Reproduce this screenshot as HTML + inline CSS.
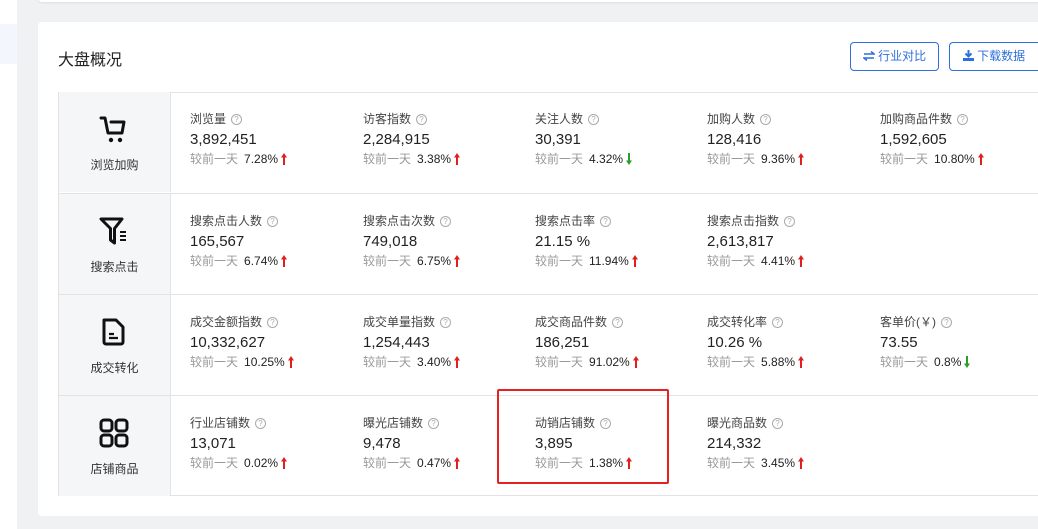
<html><head><style>
body{margin:0;width:1038px;height:529px;background:#f0f1f3;font-family:"Liberation Sans","Noto Sans CJK SC",sans-serif;position:relative;overflow:hidden}
.side{position:absolute;left:0;top:0;width:17px;height:529px;background:#fff}
.sideh{position:absolute;left:0;top:24px;width:17px;height:40px;background:#f3f6fd}
.topcard{position:absolute;left:38px;top:-10px;width:1010px;height:12px;background:#fff;border-radius:4px;box-shadow:0 1px 2px rgba(0,0,0,.08)}
.card{position:absolute;left:38px;top:22px;width:1010px;height:494px;background:#fff;border-radius:4px}
h1{position:absolute;left:58px;top:46px;margin:0;font-size:16px;font-weight:normal;color:#222}
.btn{position:absolute;top:42px;height:29px;border:1px solid #2f6fdb;border-radius:4px;color:#2f6fdb;font-size:12px;line-height:27px;box-sizing:border-box;text-align:center}
.tbl{position:absolute;left:58px;top:92px;width:990px;height:404px;border:1px solid #e3e3e3;box-sizing:border-box}
.row{position:absolute;left:0;width:990px;height:101px;border-top:1px solid #e3e3e3;box-sizing:border-box}
.lc{position:absolute;left:0;top:0;width:111px;height:100px;background:#f5f6f8;border-right:1px solid #e3e3e3;text-align:center}
.lc .t{position:absolute;left:0;right:0;top:64px;font-size:12px;color:#333}
.lc svg{position:absolute;left:40px;top:22px}
.m{position:absolute;top:18px;font-size:12px;color:#444;white-space:nowrap}
.m .q{display:inline-block;width:9px;height:9px;border:1px solid #aaa;border-radius:50%;font-size:8px;line-height:9px;text-align:center;color:#aaa;margin-left:5px;vertical-align:1px}
.m .v{font-size:15px;color:#222;margin-top:3px;line-height:19px}
.m .c{color:#999;margin-top:1px}
.m .c b{font-weight:normal;color:#222;margin-left:6px;margin-right:3px}
.a{vertical-align:-2px}
.red{position:absolute;left:497px;top:389px;width:172px;height:95px;border:2px solid #e52222;box-sizing:border-box;border-radius:2px}
</style></head><body>
<div class="side"></div><div class="sideh"></div>
<div class="topcard"></div>
<div class="card"></div>
<h1>大盘概况</h1>
<div class="btn" style="left:850px;width:89px"><svg width="12" height="10" viewBox="0 0 12 10" style="vertical-align:-1px"><path d="M1 3h10L8 0.5M11 7H1l3 2.5" fill="none" stroke="#2f6fdb" stroke-width="1.6"/></svg> 行业对比</div>
<div class="btn" style="left:949px;width:89px;border-right:none;border-radius:4px 0 0 4px"><svg width="11" height="11" viewBox="0 0 11 11" style="vertical-align:-1px"><path d="M5.5 0v6M2.5 3.5l3 3 3-3" fill="none" stroke="#2f6fdb" stroke-width="2"/><path d="M0 8h11v3H0z" fill="#2f6fdb"/></svg> 下载数据</div>
<svg width="0" height="0" style="position:absolute"><defs>
<symbol id="u" viewBox="0 0 6 12"><path d="M3 12V3" stroke="#e02020" stroke-width="2"/><path d="M0 4.5L3 0l3 4.5z" fill="#e02020"/></symbol>
<symbol id="d" viewBox="0 0 6 12"><path d="M3 0v9" stroke="#2a9d2a" stroke-width="2"/><path d="M0 7.5L3 12l3-4.5z" fill="#2a9d2a"/></symbol>
</defs></svg>
<div class="tbl">
<div class="row" style="top:-1px;border-top:none">
<div class="lc"><svg width="32" height="30" viewBox="0 0 32 30"><path d="M2 4h4l3 15h14l2-11H12" fill="none" stroke="#111" stroke-width="3" stroke-linecap="round" stroke-linejoin="round"/><circle cx="12" cy="26" r="2.2" fill="#111"/><circle cx="21" cy="26" r="2.2" fill="#111"/></svg><div class="t">浏览加购</div></div>
<div class="m" style="left:131px">浏览量<span class="q">?</span><div class="v">3,892,451</div><div class="c">较前一天<b>7.28%</b><svg class="a" width="6" height="12"><use href="#u"/></svg></div></div>
<div class="m" style="left:304px">访客指数<span class="q">?</span><div class="v">2,284,915</div><div class="c">较前一天<b>3.38%</b><svg class="a" width="6" height="12"><use href="#u"/></svg></div></div>
<div class="m" style="left:476px">关注人数<span class="q">?</span><div class="v">30,391</div><div class="c">较前一天<b>4.32%</b><svg class="a" width="6" height="12"><use href="#d"/></svg></div></div>
<div class="m" style="left:648px">加购人数<span class="q">?</span><div class="v">128,416</div><div class="c">较前一天<b>9.36%</b><svg class="a" width="6" height="12"><use href="#u"/></svg></div></div>
<div class="m" style="left:821px">加购商品件数<span class="q">?</span><div class="v">1,592,605</div><div class="c">较前一天<b>10.80%</b><svg class="a" width="6" height="12"><use href="#u"/></svg></div></div>
</div>
<div class="row" style="top:100px">
<div class="lc"><svg width="32" height="30" viewBox="0 0 32 30"><path d="M2 3h21l-7.5 9.5V27l-4-3V12.5z" fill="none" stroke="#111" stroke-width="3" stroke-linejoin="round"/><path d="M21 16h6M21 20h6M21 24h6" stroke="#111" stroke-width="2"/></svg><div class="t">搜索点击</div></div>
<div class="m" style="left:131px">搜索点击人数<span class="q">?</span><div class="v">165,567</div><div class="c">较前一天<b>6.74%</b><svg class="a" width="6" height="12"><use href="#u"/></svg></div></div>
<div class="m" style="left:304px">搜索点击次数<span class="q">?</span><div class="v">749,018</div><div class="c">较前一天<b>6.75%</b><svg class="a" width="6" height="12"><use href="#u"/></svg></div></div>
<div class="m" style="left:476px">搜索点击率<span class="q">?</span><div class="v">21.15 %</div><div class="c">较前一天<b>11.94%</b><svg class="a" width="6" height="12"><use href="#u"/></svg></div></div>
<div class="m" style="left:648px">搜索点击指数<span class="q">?</span><div class="v">2,613,817</div><div class="c">较前一天<b>4.41%</b><svg class="a" width="6" height="12"><use href="#u"/></svg></div></div>
</div>
<div class="row" style="top:201px">
<div class="lc"><svg width="32" height="30" viewBox="0 0 32 30"><path d="M5 3h12l7 7v15a2 2 0 0 1-2 2H7a2 2 0 0 1-2-2z" fill="none" stroke="#111" stroke-width="3" stroke-linejoin="round"/><path d="M10 17h5M10 21h9" stroke="#111" stroke-width="2.2"/></svg><div class="t">成交转化</div></div>
<div class="m" style="left:131px">成交金额指数<span class="q">?</span><div class="v">10,332,627</div><div class="c">较前一天<b>10.25%</b><svg class="a" width="6" height="12"><use href="#u"/></svg></div></div>
<div class="m" style="left:304px">成交单量指数<span class="q">?</span><div class="v">1,254,443</div><div class="c">较前一天<b>3.40%</b><svg class="a" width="6" height="12"><use href="#u"/></svg></div></div>
<div class="m" style="left:476px">成交商品件数<span class="q">?</span><div class="v">186,251</div><div class="c">较前一天<b>91.02%</b><svg class="a" width="6" height="12"><use href="#u"/></svg></div></div>
<div class="m" style="left:648px">成交转化率<span class="q">?</span><div class="v">10.26 %</div><div class="c">较前一天<b>5.88%</b><svg class="a" width="6" height="12"><use href="#u"/></svg></div></div>
<div class="m" style="left:821px">客单价(￥)<span class="q">?</span><div class="v">73.55</div><div class="c">较前一天<b>0.8%</b><svg class="a" width="6" height="12"><use href="#d"/></svg></div></div>
</div>
<div class="row" style="top:302px">
<div class="lc"><svg width="32" height="30" viewBox="0 0 32 30"><rect x="2" y="2" width="11" height="11" rx="3" fill="none" stroke="#111" stroke-width="3"/><rect x="17" y="2" width="11" height="11" rx="3" fill="none" stroke="#111" stroke-width="3"/><rect x="2" y="17" width="11" height="11" rx="3" fill="none" stroke="#111" stroke-width="3"/><rect x="17" y="17" width="11" height="11" rx="3" fill="none" stroke="#111" stroke-width="3"/></svg><div class="t">店铺商品</div></div>
<div class="m" style="left:131px">行业店铺数<span class="q">?</span><div class="v">13,071</div><div class="c">较前一天<b>0.02%</b><svg class="a" width="6" height="12"><use href="#u"/></svg></div></div>
<div class="m" style="left:304px">曝光店铺数<span class="q">?</span><div class="v">9,478</div><div class="c">较前一天<b>0.47%</b><svg class="a" width="6" height="12"><use href="#u"/></svg></div></div>
<div class="m" style="left:476px">动销店铺数<span class="q">?</span><div class="v">3,895</div><div class="c">较前一天<b>1.38%</b><svg class="a" width="6" height="12"><use href="#u"/></svg></div></div>
<div class="m" style="left:648px">曝光商品数<span class="q">?</span><div class="v">214,332</div><div class="c">较前一天<b>3.45%</b><svg class="a" width="6" height="12"><use href="#u"/></svg></div></div>
</div>
</div>
<div class="red"></div>
</body></html>
